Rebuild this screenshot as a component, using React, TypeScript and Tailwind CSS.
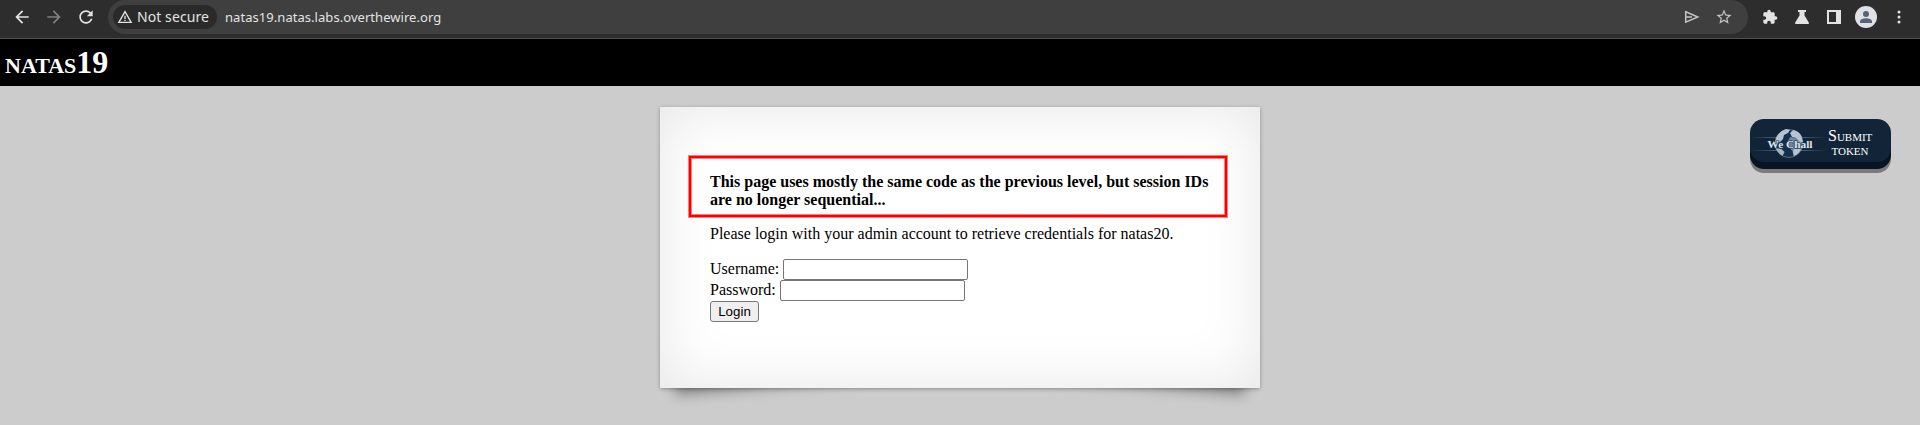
import React from "react";

const mat = (d: string, cls: string) => (
  <svg viewBox="0 0 24 24" className={cls} fill="currentColor">
    <path d={d} />
  </svg>
);

function Toolbar() {
  return (
    <div className="flex h-[39px] items-start border-b border-[#505050] bg-[#2d2d2d] font-['Noto_Sans',sans-serif] text-[#e3e3e3]">
      <div className="flex h-[34px] w-[108px] shrink-0 items-center pl-[12px]">
        {mat("M20 11H7.83l5.59-5.59L12 4l-8 8 8 8 1.41-1.41L7.83 13H20v-2z", "h-5 w-5")}
        {mat("M12 4l-1.41 1.41L16.17 11H4v2h12.17l-5.58 5.59L12 20l8-8z", "ml-3 h-5 w-5 text-[#808080]")}
        {mat("M17.65 6.35C16.2 4.9 14.21 4 12 4c-4.42 0-7.99 3.58-7.99 8s3.57 8 7.99 8c3.73 0 6.84-2.55 7.73-6h-2.08c-.82 2.33-3.04 4-5.65 4-3.31 0-6-2.69-6-6s2.69-6 6-6c1.66 0 3.14.69 4.22 1.78L13 11h7V4l-2.35 2.35z", "ml-3 h-5 w-5")}
      </div>
      <div className="flex h-[34px] w-[1640px] shrink-0 items-center rounded-r-[17px] rounded-l-[17px] bg-[#3f3f3f] pl-[5px]">
        <div className="flex h-6 w-[104px] items-center rounded-full bg-[#2a2a2a] pl-1">
          {mat("M1 21h22L12 2 1 21zm3.5-2L12 6l7.5 13zM11 16h2v2h-2zm0-6h2v5h-2z", "h-4 w-4")}
          <span className="ml-[4px] text-[14px] tracking-[0.08px] whitespace-nowrap">Not secure</span>
        </div>
        <span className="ml-2 text-[13px] tracking-[0.05px] whitespace-nowrap">natas19.natas.labs.overthewire.org</span>
        <div className="ml-auto flex items-center pr-[15px] text-[#c4c4c4]">
          <svg viewBox="0 0 16 14" className="mr-[15px] h-[14px] w-4" fill="none" stroke="currentColor" strokeWidth="1.5">
            <path d="M1.7 1.8 13.8 7 1.7 12.2zM2 7h6" />
          </svg>
          {mat("M22 9.24l-7.19-.62L12 2 9.19 8.63 2 9.24l5.46 4.73L5.82 21 12 17.27 18.18 21l-1.63-7.03L22 9.24zM12 15.4l-3.76 2.27 1-4.28-3.32-2.88 4.38-.38L12 6.1l1.71 4.04 4.38.38-3.32 2.88 1 4.28L12 15.4z", "h-[18px] w-[18px]")}
        </div>
      </div>
      <div className="flex h-[34px] items-center pl-[14px]">
        {mat("M20.5 11H19V7c0-1.1-.9-2-2-2h-4V3.5C13 2.12 11.88 1 10.5 1S8 2.12 8 3.5V5H4c-1.1 0-1.99.9-1.99 2v3.8H3.5c1.49 0 2.7 1.21 2.7 2.7s-1.21 2.7-2.7 2.7H2V20c0 1.1.9 2 2 2h3.8v-1.5c0-1.49 1.21-2.7 2.7-2.7s2.7 1.21 2.7 2.7V22H17c1.1 0 2-.9 2-2v-4h1.5c1.38 0 2.5-1.12 2.5-2.5S21.88 11 20.5 11z", "h-4 w-4")}
        <svg viewBox="0 0 14 14" className="ml-[17px] h-[14px] w-[14px]" fill="currentColor">
          <path d="M3 0h8v2H9.5v3.5l4.3 7A1 1 0 0 1 13 14H1a1 1 0 0 1-.8-1.5l4.3-7V2H3z" />
        </svg>
        <svg viewBox="0 0 14 14" className="ml-[18px] h-[14px] w-[14px]" fill="currentColor">
          <path fillRule="evenodd" d="M0 0h14v14H0zM2 2v10h7V2z" />
        </svg>
        <svg viewBox="0 0 22 22" className="ml-[14px] h-[22px] w-[22px]">
          <circle cx="11" cy="11" r="11" fill="#dee1e6" />
          <circle cx="11" cy="8" r="3" fill="#566375" />
          <path d="M5 17v-1.5c0-2 3.5-3.2 6-3.2s6 1.2 6 3.2V17z" fill="#566375" />
        </svg>
        <svg viewBox="0 0 4 14" className="ml-5 h-[14px] w-1" fill="currentColor">
          <circle cx="2" cy="2" r="1.5" />
          <circle cx="2" cy="7" r="1.5" />
          <circle cx="2" cy="12" r="1.5" />
        </svg>
      </div>
    </div>
  );
}

function WeChall() {
  return (
    <svg viewBox="0 0 78 43" className="h-[43px] w-[78px] shrink-0">
      <defs>
        <linearGradient id="beam" x1="0" x2="1">
          <stop offset="0" stopColor="#5c8298" stopOpacity="0" />
          <stop offset=".5" stopColor="#5f8196" />
          <stop offset="1" stopColor="#5c8298" stopOpacity="0" />
        </linearGradient>
      </defs>
      <rect x="1" y="18" width="76" height="1" fill="url(#beam)" />
      <rect x="1" y="31" width="76" height="1" fill="url(#beam)" />
      <circle cx="39" cy="24.5" r="14" fill="#15304a" stroke="#6d8598" strokeWidth=".7" />
      <path d="M26 19q3-7 10-9l4 1-2 3-4 2-1 4-3 3-5 1z" fill="#b5c3d2" />
      <path d="M25.500 29l6 1 3 3-2 4q-5-3-7-8z" fill="#a5b5c6" />
      <path d="M43 11q6 1 8.500 6l1.500 6-3 1-4-5-4-1-2-4z" fill="#b5c3d2" />
      <path d="M40 18l6 1 5 5 1.500 3q-1 5-5 8l-4 2-1-5-4-4-1-5z" fill="#6d859c" />
      <path d="M44 30l7 0q-2 5-7 7l-1-4z" fill="#b5c3d2" />
      <text x="17.500" y="29" fontSize="10.500" fontWeight="bold" fill="#dfe6ec" stroke="#15304a" strokeWidth="0.800" paintOrder="stroke" textLength="45" lengthAdjust="spacingAndGlyphs" fontFamily="Liberation Serif, serif">We Chall</text>
    </svg>
  );
}

export default function App() {
  return (
    <div className="h-[425px] w-[1920px] overflow-hidden bg-[#cccccc] font-['Liberation_Serif',serif] text-[16px] leading-[18px] text-black">
      <Toolbar />
      <h1 className="h-[47px] bg-black pl-[5px] text-[32px] leading-[47px] font-bold text-white [font-variant:small-caps]">natas19</h1>
      <div className="flex items-start pt-[21px]">
        <main className="relative isolate ml-[660px] h-[281px] w-[600px] shrink-0 before:absolute before:bottom-[15px] before:left-[12px] before:-z-10 before:h-[20%] before:w-1/2 before:rotate-[-5deg] before:shadow-[0_8px_14px_rgba(0,0,0,0.4)] before:content-[''] after:absolute after:right-[12px] after:bottom-[15px] after:-z-10 after:h-[20%] after:w-1/2 after:rotate-[5deg] after:shadow-[0_8px_14px_rgba(0,0,0,0.4)] after:content-['']">
          <div className="h-full bg-white pt-[49px] pl-[29px] shadow-[0_1px_4px_rgba(0,0,0,0.3),inset_0_0_60px_rgba(0,0,0,0.1)]">
            <h3 className="h-[61px] w-[538px] border-2 border-[#ff0000] pt-[15px] pl-[19px] font-bold shadow-[0_0_0_1px_rgba(255,0,0,0.5),inset_0_0_0_1px_rgba(255,0,0,0.5)]">
              This page uses mostly the same code as the previous level, but session IDs
              <br />
              are no longer sequential...
            </h3>
            <div className="pl-[21px]">
              <p className="mt-[8px]">Please login with your admin account to retrieve credentials for natas20.</p>
              <form className="mt-[16px]">
                <label className="flex h-[21px] items-start leading-[19px]">
                  Username:
                  <input className="ml-1 h-[21px] w-[185px] rounded-[2px] border border-[#767676] bg-white" />
                </label>
                <label className="flex h-[21px] items-start leading-[19px]">
                  Password:
                  <input className="ml-1 h-[21px] w-[185px] rounded-[2px] border border-[#767676] bg-white" />
                </label>
                <button type="button" className="flex h-[21px] w-[49px] items-center justify-center rounded-[3px] border border-[#767676] bg-[#efefef] font-['Liberation_Sans',sans-serif] text-[13.333px]">
                  Login
                </button>
              </form>
            </div>
          </div>
        </main>
        <a className="mt-[12px] ml-[490px] flex h-[43px] w-[141px] rounded-[14px] bg-[#122538] text-center text-white shadow-[0_7px_0_#081521,0_11px_0_#7b7b7b]">
          <WeChall />
          <span className="w-[44px] pt-[10px] text-[16px] leading-[14px] [font-variant:small-caps]">
            Submit
            <br />
            token
          </span>
        </a>
      </div>
    </div>
  );
}
